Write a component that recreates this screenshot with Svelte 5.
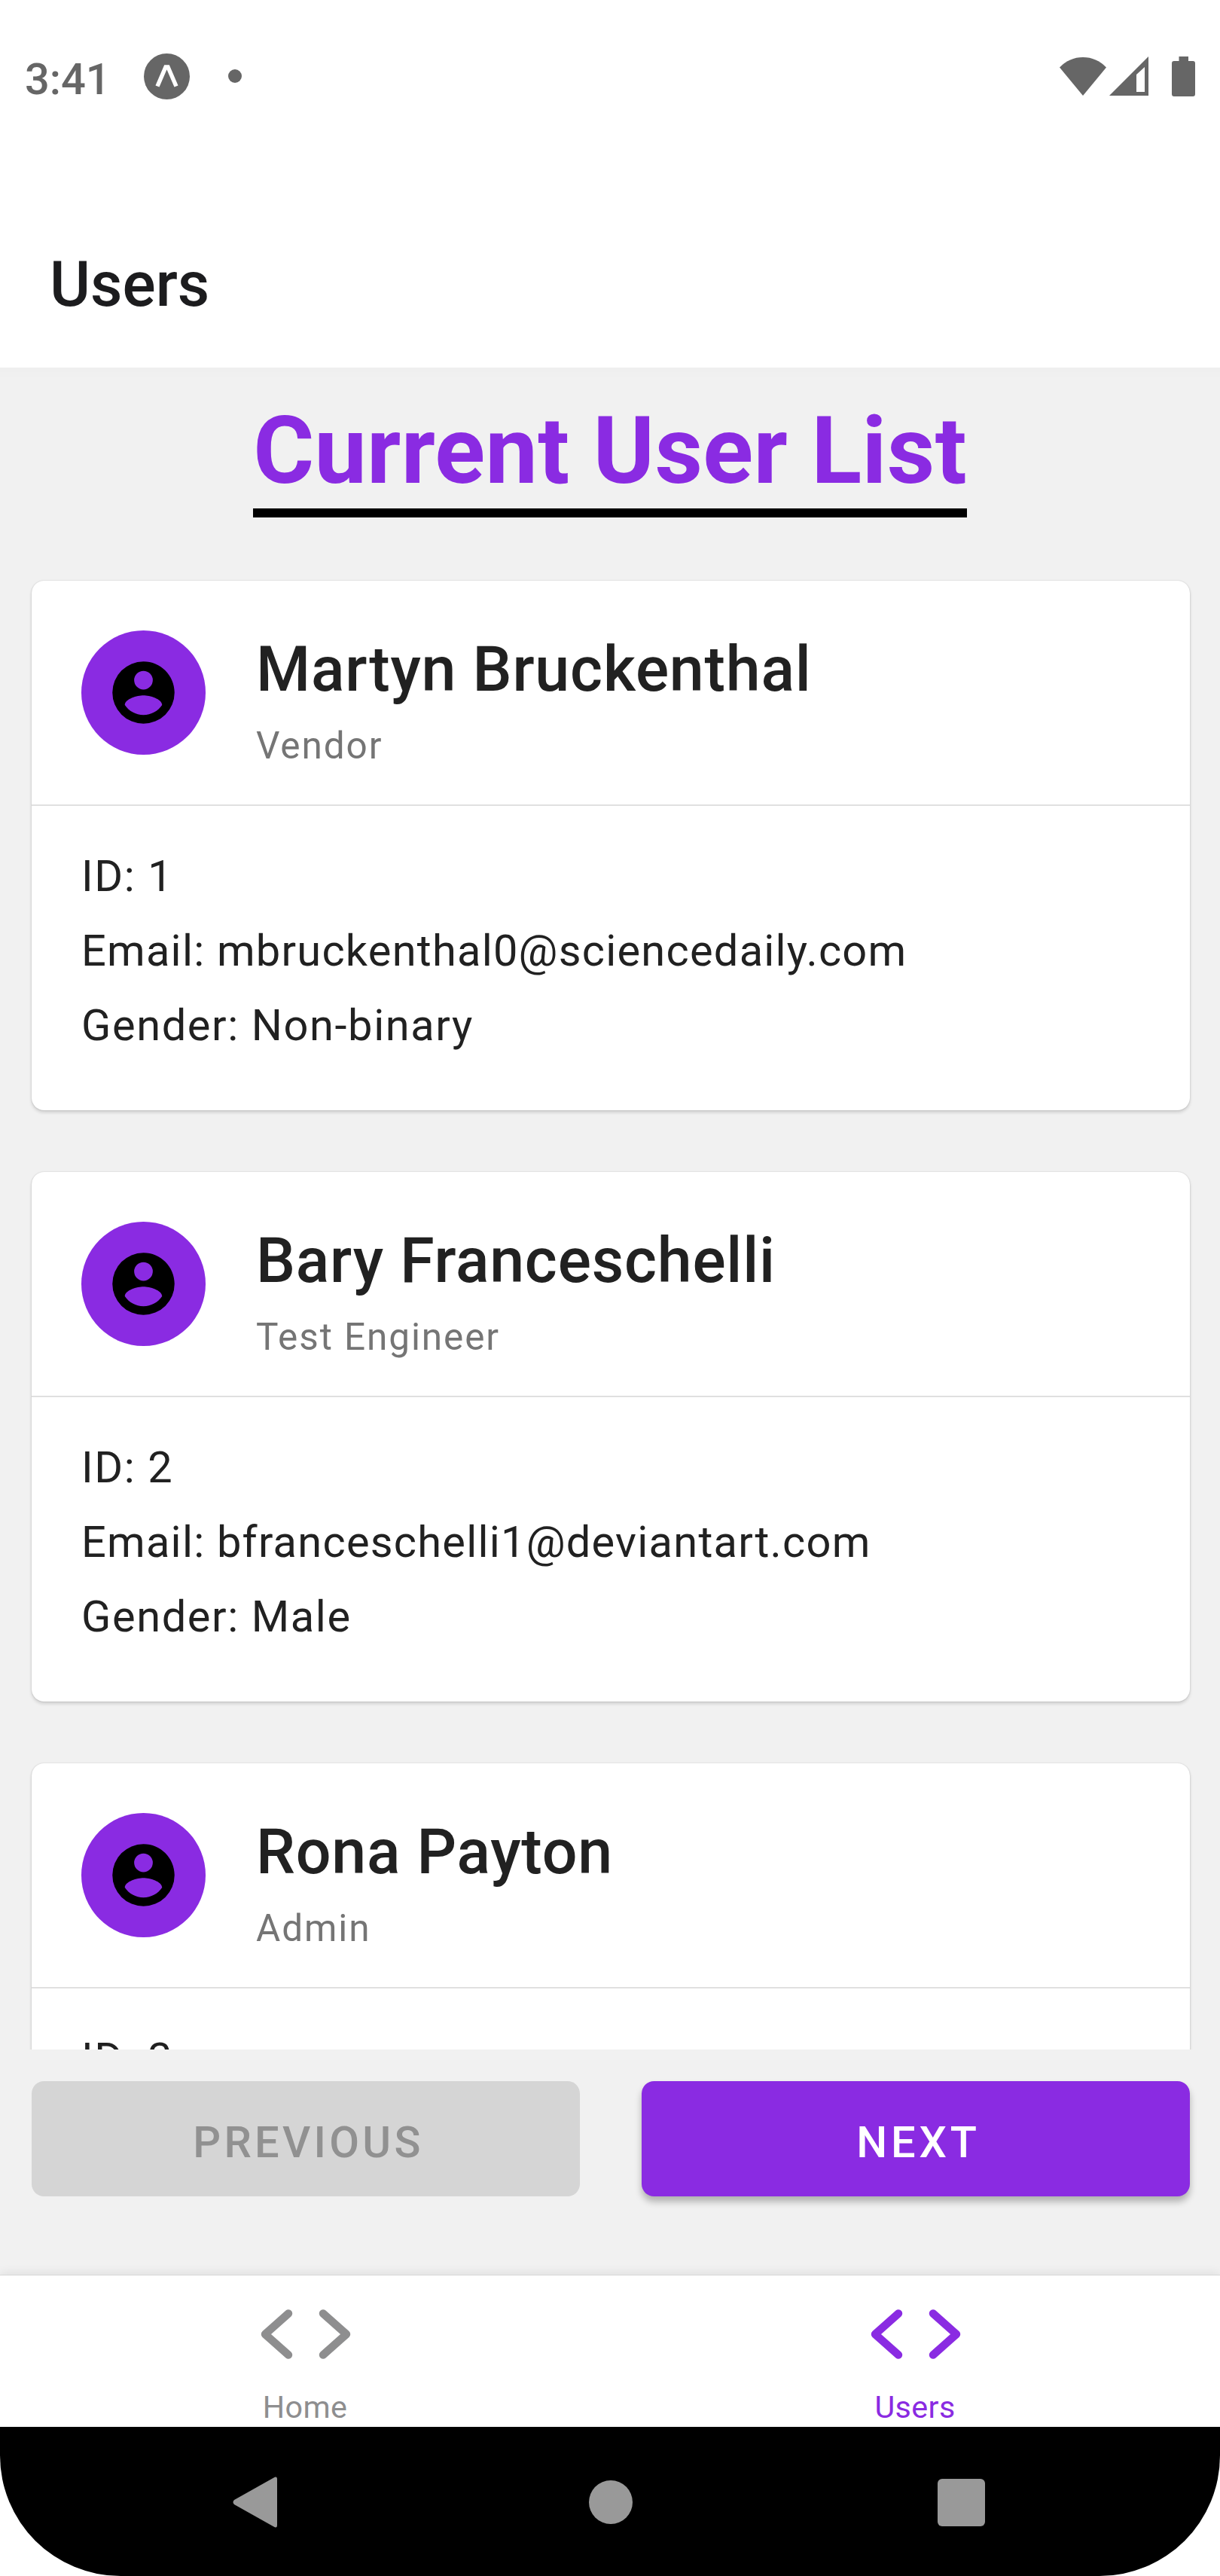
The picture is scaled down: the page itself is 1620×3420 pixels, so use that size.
<script lang="ts">
  const users = [
    { id: 1, name: 'Martyn Bruckenthal', role: 'Vendor', email: 'mbruckenthal0@sciencedaily.com', gender: 'Non-binary' },
    { id: 2, name: 'Bary Franceschelli', role: 'Test Engineer', email: 'bfranceschelli1@deviantart.com', gender: 'Male' },
    { id: 3, name: 'Rona Payton', role: 'Admin', email: '', gender: '' }
  ];
  const tabs = ['Home', 'Users'];
  let active = $state('Users');
</script>

<div class="screen">
  <div class="status">
    <span class="time">3:41</span>
    <svg class="expo" viewBox="0 0 61 61"><circle cx="30.5" cy="30.5" r="30.5" /><path d="M18 43.5 29 18h3L43 43.5" /></svg>
    <span class="dot"></span>
    <span class="spacer"></span>
    <svg class="wifi" viewBox="0 0 62 52"><path d="M0 14.500Q13 1 31 1Q49 1 62 14.500L31 52Z" /></svg>
    <svg class="signal" viewBox="0 0 52 52"><path fill-rule="evenodd" d="M52 0V52H0ZM47 14 36 24V47H47Z" /></svg>
    <svg class="battery" viewBox="0 0 31 53"><path d="M9.500 0H22V6H28Q31 6 31 9V50Q31 53 28 53H3Q0 53 0 50V9Q0 6 3 6H9.500Z" /></svg>
  </div>

  <header><h1>Users</h1></header>

  <main>
    <h2>Current User List</h2>
    <div class="list">
      {#each users as user (user.id)}
        <article>
          <div class="head">
            <div class="avatar">
              <svg viewBox="0 0 24 24"><path d="M12,19.2C9.5,19.2 7.29,17.92 6,16C6.03,14 10,12.9 12,12.9C14,12.9 17.97,14 18,16C16.71,17.92 14.5,19.2 12,19.2M12,5A3,3 0 0,1 15,8A3,3 0 0,1 12,11A3,3 0 0,1 9,8A3,3 0 0,1 12,5M12,2A10,10 0 0,0 2,12A10,10 0 0,0 12,22A10,10 0 0,0 22,12C22,6.47 17.5,2 12,2Z" /></svg>
            </div>
            <div class="who">
              <div class="name">{user.name}</div>
              <div class="role">{user.role}</div>
            </div>
          </div>
          <div class="body">
            <p>ID: {user.id}</p>
            {#if user.email}
              <p class="email">Email: {user.email}</p>
              <p>Gender: {user.gender}</p>
            {/if}
          </div>
        </article>
      {/each}
    </div>
    <div class="pager">
      <button disabled>PREVIOUS</button>
      <button class="next">NEXT</button>
    </div>
  </main>

  <nav>
    {#each tabs as tab}
      <button class="tab" class:active={active === tab} onclick={() => (active = tab)}>
        <svg viewBox="0 0 120 68"><path d="M37 6.500 6 34l31 27.500M83 6.500 114 34l-31 27.500" /></svg>
        <span>{tab}</span>
      </button>
    {/each}
  </nav>

  <div class="system">
    <svg viewBox="0 0 60 70"><path d="M54.500 2.500Q59 0 59 4.500V65.500Q59 70 54.500 67.500L2 38Q-1 35 2 32Z" /></svg>
    <span class="home"></span>
    <span class="recent"></span>
  </div>
</div>

<style>
  :global(body) { margin: 0; background: #fff; }
  .screen {
    width: 1620px; height: 3420px; display: flex; flex-direction: column;
    background: #fff; color: #212121; font-family: Roboto, sans-serif; overflow: hidden;
  }
  h1, h2, p { margin: 0; }
  button { font-family: inherit; border: 0; padding: 0; }

  .status { height: 202px; flex: none; display: flex; align-items: center; padding: 0 33px; box-sizing: border-box; color: #666; fill: #666; }
  .time { font-size: 57.75px; font-weight: 500; line-height: 72px; width: 158px; padding-top: 8px; }
  .status svg { display: block; }
  .expo { width: 61px; height: 61px; }
  .expo path { fill: none; stroke: #fff; stroke-width: 5.5; }
  .dot { width: 18px; height: 18px; border-radius: 50%; background: #666; margin-left: 51px; }
  .spacer { flex: 1; }
  .wifi { width: 62px; height: 52px; }
  .signal { width: 52px; height: 52px; margin-left: 4px; }
  .battery { width: 31px; height: 53px; margin-left: 31px; }

  header { height: 286px; flex: none; padding: 66px 66px 0; box-sizing: border-box; display: flex; align-items: center; }
  h1 { font-size: 82.5px; font-weight: 500; line-height: 100px; color: #1c1c1e; }

  main { flex: 1; min-height: 0; background: #f1f1f1; display: flex; flex-direction: column; box-shadow: inset 0 13px 4px -4px #efefef; }
  h2 { align-self: center; margin-top: 35px; font-size: 123.75px; font-weight: 700; line-height: 152px; letter-spacing: .35px; color: #8a2be2; border-bottom: 12px solid #000; white-space: nowrap; }
  .list { height: 1950px; flex: none; box-sizing: content-box; margin: 74px 0 42px; padding: 10px 40px 0 42px; display: flex; flex-direction: column; gap: 82px; overflow: hidden; }
  article { flex: none; height: 703px; background: #fff; border-radius: 16.5px; box-shadow: 0 0 2px rgba(0,0,0,.18), 0 3px 4px rgba(0,0,0,.14); }
  .head { height: 297px; display: flex; border-bottom: 2px solid #e0e0e0; padding: 0 66px; }
  .avatar { width: 165px; height: 165px; margin-top: 66px; border-radius: 50%; background: #8a2be2; display: flex; align-items: center; justify-content: center; }
  .avatar svg { width: 99px; height: 99px; }
  .who { margin: 56px 0 0 67px; white-space: nowrap; }
  .name { font-size: 82.5px; font-weight: 500; line-height: 124px; letter-spacing: .78px; }
  .role { font-size: 49.5px; line-height: 78px; letter-spacing: 1.9px; color: #757575; }
  .body { padding: 44px 66px 0; }
  .body p { font-size: 57.75px; line-height: 99px; letter-spacing: 1.6px; white-space: nowrap; }
  .body .email { letter-spacing: 1.24px; }

  .pager { display: flex; gap: 82px; padding: 0 40px 0 42px; }
  .pager button { flex: 1; height: 153px; border-radius: 16.5px; background: #d5d5d5; color: #919191; font-size: 57.75px; font-weight: 500; letter-spacing: 4.3px; padding: 8px 0 0 7px; }
  .pager .next { background: #8a2be2; color: #fff; letter-spacing: 4.8px; box-shadow: 0 7px 10px rgba(0,0,0,.27); }

  nav { height: 202px; flex: none; box-sizing: border-box; display: flex; background: #fff; border-top: 1px solid #d8d8d8; box-shadow: 0 -3px 12px rgba(0,0,0,.07); position: relative; }
  .tab { flex: 1; display: flex; flex-direction: column; align-items: center; background: none; color: #8e8e8f; }
  .tab svg { width: 120px; height: 68px; margin: 44px 0 0 2px; fill: none; stroke: currentColor; stroke-width: 10.5; stroke-linecap: round; stroke-linejoin: round; }
  .tab span { font-size: 41.25px; line-height: 50px; margin-top: 38px; letter-spacing: .4px; }
  .tab.active { color: #8a2be2; }

  .system { height: 198px; flex: none; background: #000; border-radius: 0 0 160px 160px; display: flex; align-items: center; justify-content: space-between; padding: 2px 312px 0 309px; box-sizing: border-box; }
  .system svg { width: 60px; height: 70px; fill: #999; }
  .home { width: 58px; height: 58px; border-radius: 50%; background: #999; margin-left: 8px; }
  .recent { width: 63px; height: 63px; border-radius: 6px; background: #999; }
</style>
